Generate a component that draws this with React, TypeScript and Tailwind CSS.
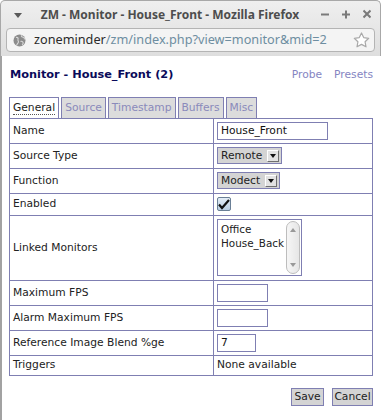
import React from 'react';

const rows = [
  'Name',
  'Source Type',
  'Function',
  'Enabled',
  'Linked Monitors',
  'Maximum FPS',
  'Alarm Maximum FPS',
  'Reference Image Blend %ge',
  'Triggers',
];

function SelectBox({ value }: { value: string }) {
  return (
    <div className="flex h-[17px] w-fit items-center border border-[#7f7fb2] bg-[#d4d4d4] pl-[3px] pr-[2px]">
      <span className="mr-[5px] whitespace-nowrap leading-none text-[#222]">{value}</span>
      <span className="flex h-[12px] w-[12px] items-center justify-center border-t border-l border-t-white border-l-white border-r border-b border-r-[#6f6f6f] border-b-[#6f6f6f] bg-[#e2e2e2]">
        <svg width="6" height="4" viewBox="0 0 6 4">
          <path d="M0 0h6L3 4z" fill="#111" />
        </svg>
      </span>
    </div>
  );
}

function TextInput({ value, width }: { value?: string; width: string }) {
  return (
    <div className={`flex h-[18px] items-center border border-[#7f7fb2] bg-white px-[3px] text-[#111] ${width}`}>
      {value}
    </div>
  );
}

function ValueCell({ label }: { label: string }) {
  switch (label) {
    case 'Name':
      return <TextInput value="House_Front" width="w-[111px]" />;
    case 'Source Type':
      return <SelectBox value="Remote" />;
    case 'Function':
      return <SelectBox value="Modect" />;
    case 'Enabled':
      return (
        <div className="flex h-[14px] w-[14px] items-center justify-center rounded-[2px] border border-[#6a7f96] bg-gradient-to-b from-[#e4edf6] to-[#b9cde1]">
          <svg width="12" height="11" viewBox="0 0 12 11">
            <path d="M1 5.5l3 3.5L11 1" stroke="#111" strokeWidth="2.2" fill="none" />
          </svg>
        </div>
      );
    case 'Linked Monitors':
      return (
        <div className="flex h-[57px] w-[85px] overflow-hidden border border-[#7f7fb2] bg-white">
          <div className="flex-1 whitespace-nowrap pl-[3px] pt-[2px] text-[10.4px] leading-[14px] text-[#222]">
            <div>Office</div>
            <div>House_Back</div>
          </div>
          <div className="my-[1px] mr-[1px] flex w-[14px] shrink-0 flex-col items-center justify-between rounded-full border border-[#bdbdbd] bg-gradient-to-r from-[#f6f6f6] to-[#e6e6e6] py-[6px]">
            <svg width="6" height="4" viewBox="0 0 6 4"><path d="M3 0l3 4H0z" fill="#999" /></svg>
            <svg width="6" height="4" viewBox="0 0 6 4"><path d="M0 0h6L3 4z" fill="#999" /></svg>
          </div>
        </div>
      );
    case 'Maximum FPS':
    case 'Alarm Maximum FPS':
      return <TextInput width="w-[51px]" />;
    case 'Reference Image Blend %ge':
      return <TextInput value="7" width="w-[39px]" />;
    default:
      return <span className="text-[#222]">None available</span>;
  }
}

const rowHeight: Record<string, string> = {
  Enabled: 'h-[22px]',
  'Linked Monitors': 'h-[65px]',
  Triggers: 'h-[20px]',
};

export default function App() {
  const tabs = ['General', 'Source', 'Timestamp', 'Buffers', 'Misc'];
  return (
    <div className="flex h-[420px] w-[381px] flex-col overflow-hidden bg-white">
      {/* window chrome */}
      <div className="rounded-t-[5px] border-x border-t border-[#a8a8a8] bg-gradient-to-b from-[#efefef] to-[#dedede]">
        <div className="relative flex h-[27px] items-center">
          <svg className="absolute left-[13px] top-[12px]" width="8" height="5" viewBox="0 0 8 5">
            <path d="M0 0h8L4 5z" fill="#5a5a5a" />
          </svg>
          <div className="w-full pr-[42px] pl-[1px] text-center font-['Noto_Sans',sans-serif] text-[12px] font-bold text-[#4d4d4d]">
            ZM - Monitor - House_Front - Mozilla Firefox
          </div>
          <div className="absolute right-[9px] top-[7px] flex items-center gap-[13px]">
            <svg width="8" height="12" viewBox="0 0 8 12"><path d="M0 6.5h8" stroke="#7a7a7a" strokeWidth="2" /></svg>
            <svg width="8" height="12" viewBox="0 0 8 12"><path d="M0 6.5h8M4 2.5v8" stroke="#7a7a7a" strokeWidth="2" /></svg>
            <svg width="8" height="12" viewBox="0 0 8 12"><path d="M0.5 2.5l7 7M7.5 2.5l-7 7" stroke="#7a7a7a" strokeWidth="2" /></svg>
          </div>
        </div>
        <div className="px-[5px] pb-[4px]">
          <div className="flex h-[24px] items-center whitespace-nowrap rounded-[4px] border border-[#b4b4b4] bg-[#f4f4f4] pl-[6px] pr-[4px] font-['Noto_Sans',sans-serif] text-[12.7px]">
            <svg width="13" height="13" viewBox="0 0 13 13" className="mr-[8px] shrink-0">
              <circle cx="6.5" cy="6.5" r="6" fill="#8c8c8c" />
              <path d="M3 3.5c1.5-.5 2.5.5 2 1.8-.6 1.2.8 1.8.4 3-.3 1-1.5 1.5-1.8 3.2M8.5 1.2c-.5 1.3.5 2 1.6 2 1 0 1.5 1 1.2 2.2M7.5 7.5c1-.5 2.2 0 2.6 1 .3.8-.3 1.8-1 2.4" stroke="#d9d9d9" strokeWidth="1.1" fill="none" />
            </svg>
            <span className="text-[#2b2b2b]">zoneminder</span>
            <span className="text-[#6e8ea1]">/zm/index.php?view=monitor&amp;mid=2</span>
            <svg width="17" height="16" viewBox="0 0 17 16" className="ml-auto shrink-0">
              <path d="M8.5 1l2.2 4.6 5 .7-3.6 3.5.9 5-4.5-2.4-4.5 2.4.9-5L1.3 6.3l5-.7z" fill="#fff" stroke="#a9a9a9" strokeWidth="1.2" strokeLinejoin="round" />
            </svg>
          </div>
        </div>
      </div>

      {/* page */}
      <div className="flex-1 border-l-2 border-[#a2a2a2] pl-[7px] pr-[7px] pt-[11px] font-['DejaVu_Sans',Verdana,sans-serif] text-[10.7px]">
        <div className="flex items-center justify-between pl-[1px]">
          <h2 className="text-[11.3px] font-bold text-[#0a0a5a]">Monitor - House_Front (2)</h2>
          <div className="flex gap-[12px] pr-[1px] text-[#8585c2]">
            <span>Probe</span>
            <span>Presets</span>
          </div>
        </div>

        <div className="mt-[13px] flex gap-[2px]">
          {tabs.map((t, i) => (
            <div
              key={t}
              className={
                i === 0
                  ? 'flex h-[21px] items-center border border-b-0 border-[#7f7fb2] bg-white px-[3px] text-[#222]'
                  : 'flex h-[21px] items-center border border-b-0 border-[#7f7fb2] bg-[#dcdcdc] px-[3px] text-[#8a8abb]'
              }
            >
              <span className={i === 0 ? 'border-b border-dotted border-[#555] leading-[13px]' : ''}>{t}</span>
            </div>
          ))}
        </div>

        <table className="w-[364px] border-collapse">
          <tbody>
            {rows.map((r) => (
              <tr key={r} className={rowHeight[r] ?? 'h-[25px]'}>
                <td className="w-[204px] border border-[#7f7fb2] py-0 pl-[3px] align-middle text-[#222]">{r}</td>
                <td className="border border-[#7f7fb2] py-0 pl-[3px] align-middle">
                  <ValueCell label={r} />
                </td>
              </tr>
            ))}
          </tbody>
        </table>

        <div className="mt-[12px] flex justify-end gap-[8px] pr-[1px]">
          <button className="h-[18px] w-[33px] border border-[#7f7fb2] bg-[#d4d4d4] text-[#222]">Save</button>
          <button className="h-[18px] w-[41px] border border-[#7f7fb2] bg-[#d4d4d4] text-[#222]">Cancel</button>
        </div>
      </div>
    </div>
  );
}
